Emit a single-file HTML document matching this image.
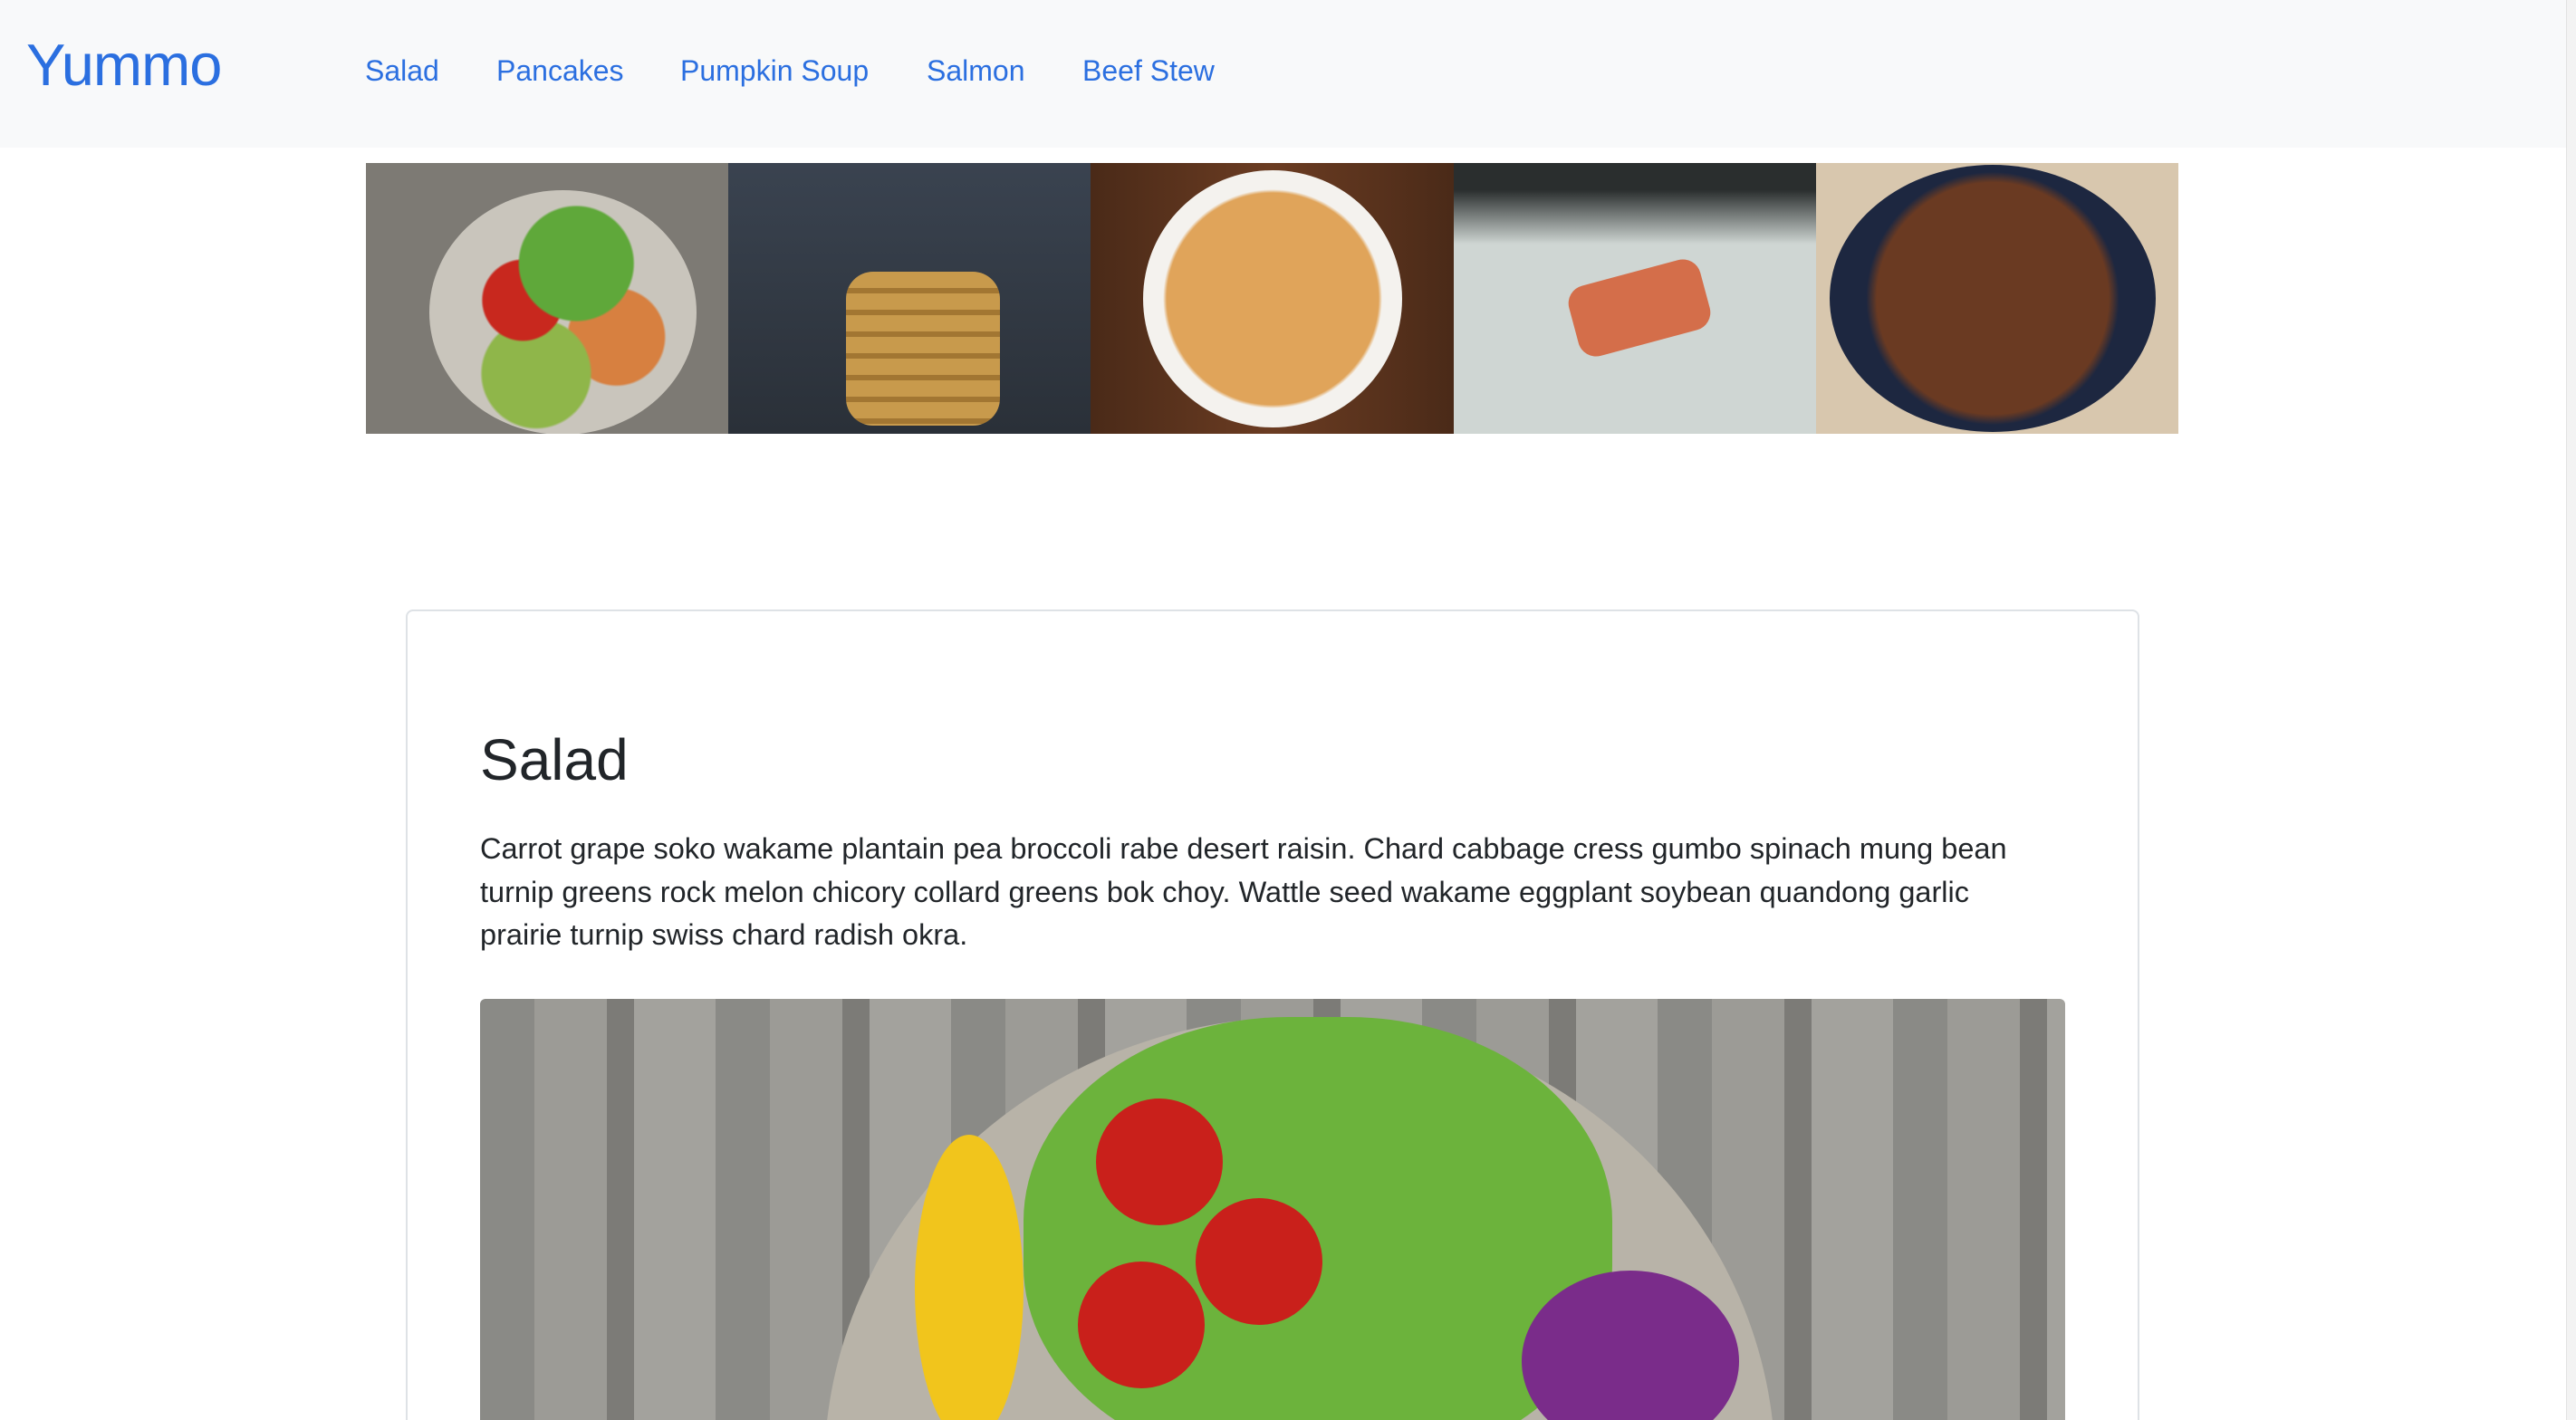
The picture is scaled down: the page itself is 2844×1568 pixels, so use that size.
<!DOCTYPE html>
<html><head><meta charset="utf-8"><style>
*{margin:0;padding:0;box-sizing:border-box}
html,body{width:2844px;height:1568px;overflow:hidden;background:#fff;font-family:"Liberation Sans",sans-serif}
.wrap{position:relative;width:2844px;height:1568px;overflow:hidden}
.nav{position:absolute;left:0;top:0;width:2833px;height:163px;background:#f8f9fa}
.brand{position:absolute;left:29px;top:34px;font-size:65px;color:#2b6fe0;letter-spacing:-1px}
.nav a{position:absolute;top:60px;font-size:32px;color:#2b6fe0;text-decoration:none}
.sb{position:absolute;left:2833px;top:0;width:11px;height:1568px;background:#f3f3f3;border-left:1px solid #e2e2e2}
.strip{position:absolute;left:404px;top:180px;width:2001px;height:299px;display:flex}
.strip div{flex:1;position:relative;overflow:hidden}
.card{position:absolute;left:448px;top:673px;width:1914px;height:1000px;border:2px solid #dee2e6;border-radius:8px}
h1{position:absolute;left:530px;top:802px;font-size:64px;font-weight:400;color:#212529}
p{position:absolute;left:530px;top:914px;width:1720px;font-size:32.5px;line-height:47.5px;color:#212529}
.big{position:absolute;left:530px;top:1103px;width:1750px;height:500px;overflow:hidden;border-radius:6px 6px 0 0;
background:repeating-linear-gradient(90deg,#8a8a86 0 60px,#9c9b96 60px 140px,#7c7b77 140px 170px,#a3a29d 170px 260px)}
</style></head><body><div class="wrap">
<div class="nav">
<div class="brand">Yummo</div>
<a style="left:403px">Salad</a><a style="left:548px">Pancakes</a><a style="left:751px">Pumpkin Soup</a><a style="left:1023px">Salmon</a><a style="left:1195px">Beef Stew</a>
</div>
<div class="sb"></div>
<div class="strip">
<div style="background:#7d7a74"><div style="position:absolute;left:70px;top:30px;width:295px;height:270px;border-radius:50%;background:radial-gradient(circle at 55% 30%,#5fa83a 0 25%,transparent 26%),radial-gradient(circle at 35% 45%,#c8281e 0 18%,transparent 19%),radial-gradient(circle at 40% 75%,#8fb64a 0 22%,transparent 23%),radial-gradient(circle at 70% 60%,#d78040 0 20%,transparent 21%),#c9c5bc"></div></div>
<div style="background:linear-gradient(#3a4350,#2a3038)"><div style="position:absolute;left:130px;top:120px;width:170px;height:170px;border-radius:30px;background:repeating-linear-gradient(#c89a4c 0 18px,#a27632 18px 24px)"></div></div>
<div style="background:linear-gradient(90deg,#4a2a18,#6b3c22,#4a2a18)"><div style="position:absolute;left:58px;top:8px;width:286px;height:284px;border-radius:50%;background:radial-gradient(circle,#e0a45a 0 58%,#f4f2ee 60%)"></div></div>
<div style="background:linear-gradient(#2a2e2e 0 10%,#cfd6d3 30%)"><div style="position:absolute;left:130px;top:120px;width:150px;height:80px;border-radius:20px;background:#d46e4a;transform:rotate(-15deg)"></div></div>
<div style="background:#d8c7ae"><div style="position:absolute;left:15px;top:2px;width:360px;height:295px;border-radius:50%;background:radial-gradient(circle,#6a3a22 0 55%,#1d2740 60%)"></div></div>
</div>
<div class="card"></div>
<h1>Salad</h1>
<p>Carrot grape soko wakame plantain pea broccoli rabe desert raisin. Chard cabbage cress gumbo spinach mung bean turnip greens rock melon chicory collard greens bok choy. Wattle seed wakame eggplant soybean quandong garlic prairie turnip swiss chard radish okra.</p>
<div class="big">
<div style="position:absolute;left:380px;top:20px;width:1050px;height:1000px;border-radius:50%;background:#b8b3a8"></div>
<div style="position:absolute;left:600px;top:20px;width:650px;height:500px;border-radius:45%;background:#6cb33c"></div>
<div style="position:absolute;left:480px;top:150px;width:120px;height:340px;border-radius:50%;background:#f1c51c"></div>
<div style="position:absolute;left:680px;top:110px;width:140px;height:140px;border-radius:50%;background:#c9201b"></div>
<div style="position:absolute;left:790px;top:220px;width:140px;height:140px;border-radius:50%;background:#c9201b"></div>
<div style="position:absolute;left:660px;top:290px;width:140px;height:140px;border-radius:50%;background:#c9201b"></div>
<div style="position:absolute;left:1150px;top:300px;width:240px;height:200px;border-radius:50%;background:#7a2c8a"></div>
</div>
</div></body></html>
